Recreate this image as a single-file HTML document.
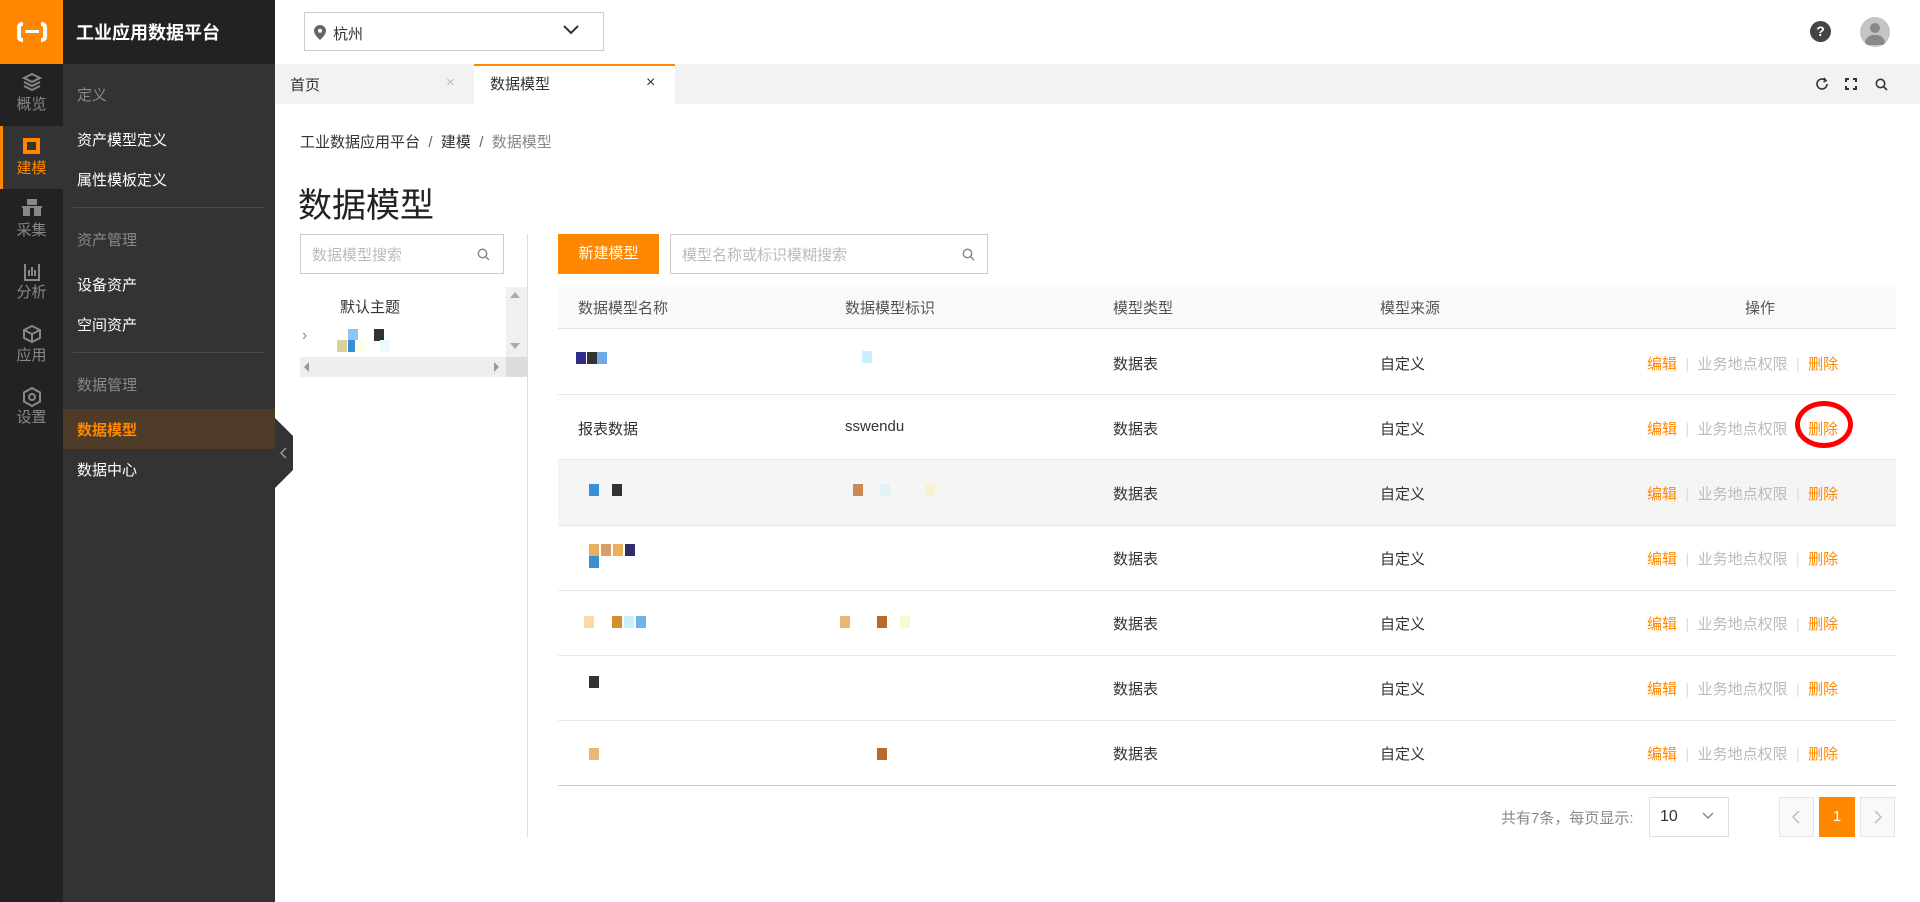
<!DOCTYPE html>
<html><head><meta charset="utf-8"><style>
*{box-sizing:border-box;margin:0;padding:0}
body{width:1920px;height:902px;position:relative;overflow:hidden;background:#fff;font-family:"Liberation Sans","Noto Sans CJK SC",sans-serif;font-size:15px;color:#333}
.a{position:absolute}
.ib{left:0;top:0;width:63px;height:902px;background:#222}
.nav{left:63px;top:0;width:212px;height:902px;background:#333}
.ic{left:0;width:63px;text-align:center;color:#888;font-size:15px}
.nt{left:77px;color:#fff;font-size:15px}
.ng{left:77px;color:#888;font-size:15px}
.td{position:absolute;font-size:15px;color:#333}
.px{position:absolute;width:10px;height:12px}
</style></head><body>
<div class="a ib"></div>
<div class="a nav"></div>
<div class="a" style="left:0;top:0;width:63px;height:64px;background:#ff8800"></div>
<div class="a" style="left:17px;top:22px;width:30px;height:20px;border:4px solid #fff;border-radius:5px"></div>
<div class="a" style="left:23px;top:18px;width:18px;height:28px;background:#ff8800"></div>
<div class="a" style="left:25px;top:30px;width:14px;height:3px;background:#fff"></div>
<div class="a" style="left:63px;top:0;width:212px;height:64px;background:#222"></div>
<div class="a" style="left:76px;top:19px;color:#fff;font-size:18px;font-weight:bold">工业应用数据平台</div>
<!-- icon bar -->
<svg class="a" style="left:22px;top:72px" width="20" height="20" viewBox="0 0 20 20" fill="none" stroke="#888" stroke-width="2"><path d="M10 2L18 6L10 10L2 6Z"/><path d="M2 10L10 14L18 10"/><path d="M2 14L10 18L18 14"/></svg>
<div class="a ic" style="top:93px">概览</div>
<div class="a" style="left:0;top:126px;width:63px;height:63px;background:#333"></div>
<div class="a" style="left:0;top:126px;width:3px;height:63px;background:#ff8800"></div>
<div class="a" style="left:23px;top:138px;width:17px;height:16px;border:2px solid #ff8800;background:#ff8800;padding:2px"><div style="width:9px;height:8px;background:#333;border:1px solid #333"></div></div>
<div class="a ic" style="top:157px;color:#ff8800">建模</div>
<svg class="a" style="left:22px;top:199px" width="20" height="18" viewBox="0 0 20 18" fill="#888"><rect x="5" y="0" width="10" height="6"/><rect x="1" y="8" width="7" height="9"/><rect x="12" y="8" width="7" height="9"/><rect x="0" y="7" width="20" height="2"/></svg>
<div class="a ic" style="top:219px">采集</div>
<svg class="a" style="left:22px;top:262px" width="20" height="20" viewBox="0 0 20 20" fill="none" stroke="#888" stroke-width="2"><path d="M3 2V18H17V2"/><path d="M7 8V14M10 5V14M13 8V14"/></svg>
<div class="a ic" style="top:281px">分析</div>
<svg class="a" style="left:22px;top:324px" width="20" height="20" viewBox="0 0 20 20" fill="none" stroke="#888" stroke-width="2"><path d="M10 2L18 6V14L10 18L2 14V6Z"/><path d="M2 6L10 10L18 6M10 10V18"/></svg>
<div class="a ic" style="top:344px">应用</div>
<svg class="a" style="left:22px;top:387px" width="20" height="20" viewBox="0 0 20 20" fill="none" stroke="#888" stroke-width="2"><path d="M10 1L18 5.5V14.5L10 19L2 14.5V5.5Z"/><circle cx="10" cy="10" r="3"/></svg>
<div class="a ic" style="top:406px">设置</div>
<!-- nav -->
<div class="a ng" style="top:84px">定义</div>
<div class="a nt" style="top:129px">资产模型定义</div>
<div class="a nt" style="top:169px">属性模板定义</div>
<div class="a" style="left:73px;top:207px;width:192px;height:1px;background:#4a4a4a"></div>
<div class="a ng" style="top:229px">资产管理</div>
<div class="a nt" style="top:274px">设备资产</div>
<div class="a nt" style="top:314px">空间资产</div>
<div class="a" style="left:73px;top:352px;width:192px;height:1px;background:#4a4a4a"></div>
<div class="a ng" style="top:374px">数据管理</div>
<div class="a" style="left:63px;top:409px;width:212px;height:40px;background:#4e3c28"></div>
<div class="a nt" style="top:419px;color:#ff8800;font-weight:bold">数据模型</div>
<div class="a nt" style="top:459px">数据中心</div>
<svg class="a" style="left:275px;top:418px" width="20" height="70" viewBox="0 0 20 70"><path d="M0 0L18 18V52L0 70Z" fill="#333"/><path d="M11 30L6 35L11 40" stroke="#999" stroke-width="1.5" fill="none"/></svg>
<!-- header -->
<div class="a" style="left:304px;top:12px;width:300px;height:39px;border:1px solid #ccc"></div>
<svg class="a" style="left:314px;top:25px" width="12" height="15" viewBox="0 0 12 15"><path d="M6 0C2.7 0 0 2.6 0 5.8 0 10 6 15 6 15S12 10 12 5.8C12 2.6 9.3 0 6 0Z" fill="#666"/><circle cx="6" cy="5.8" r="2" fill="#fff"/></svg>
<div class="a" style="left:333px;top:23px;font-size:15px;color:#333">杭州</div>
<svg class="a" style="left:563px;top:25px" width="16" height="10" viewBox="0 0 16 10"><path d="M1 1L8 8L15 1" stroke="#333" stroke-width="2" fill="none"/></svg>
<div class="a" style="left:1810px;top:21px;width:21px;height:21px;border-radius:50%;background:#444;color:#fff;font-weight:bold;font-size:14px;text-align:center;line-height:21px">?</div>
<div class="a" style="left:1860px;top:17px;width:30px;height:30px;border-radius:50%;background:#c4c4c4;overflow:hidden"><div style="position:absolute;left:10px;top:6px;width:10px;height:10px;border-radius:50%;background:#888"></div><div style="position:absolute;left:5px;top:18px;width:20px;height:10px;border-radius:10px 10px 2px 2px;background:#888"></div></div>
<!-- tabs -->
<div class="a" style="left:275px;top:64px;width:1645px;height:40px;background:#f2f2f2"></div>
<div class="a" style="left:290px;top:74px;font-size:15px">首页</div>
<div class="a" style="left:446px;top:74px;color:#bbb;font-size:15px">×</div>
<div class="a" style="left:474px;top:64px;width:201px;height:40px;background:#fff;border-top:2px solid #ff8800"></div>
<div class="a" style="left:490px;top:73px;font-size:15px">数据模型</div>
<div class="a" style="left:646px;top:74px;color:#333;font-size:16px">×</div>
<svg class="a" style="left:1815px;top:77px" width="14" height="14" viewBox="0 0 14 14" fill="none" stroke="#333" stroke-width="1.6"><path d="M12 7A5 5 0 1 1 10 3"/><path d="M9 1L11 3.5L8.5 5"/></svg>
<svg class="a" style="left:1845px;top:78px" width="12" height="12" viewBox="0 0 12 12" fill="none" stroke="#333" stroke-width="2"><path d="M1 4V1H4M8 1H11V4M11 8V11H8M4 11H1V8"/></svg>
<svg class="a" style="left:1875px;top:78px" width="13" height="13" viewBox="0 0 13 13" fill="none" stroke="#333" stroke-width="1.6"><circle cx="5.5" cy="5.5" r="4.2"/><path d="M8.5 8.5L12 12"/></svg>
<!-- content -->
<div class="a" style="left:300px;top:131px;font-size:15px;color:#333">工业数据应用平台 <span style="color:#666">&nbsp;/&nbsp;</span> 建模 <span style="color:#666">&nbsp;/&nbsp;</span> <span style="color:#888">数据模型</span></div>
<div class="a" style="left:298px;top:178px;font-size:34px;color:#222">数据模型</div>
<div class="a" style="left:300px;top:234px;width:204px;height:40px;border:1px solid #ccc"></div>
<div class="a" style="left:312px;top:244px;color:#bbb;font-size:15px">数据模型搜索</div>
<svg class="a" style="left:477px;top:248px" width="13" height="13" viewBox="0 0 13 13" fill="none" stroke="#888" stroke-width="1.5"><circle cx="5.5" cy="5.5" r="4.2"/><path d="M8.5 8.5L12 12"/></svg>
<div class="a" style="left:527px;top:234px;width:1px;height:603px;background:#ddd"></div>
<div class="a" style="left:506px;top:287px;width:21px;height:70px;background:#f0f0f0"></div>
<div class="a" style="left:300px;top:357px;width:227px;height:20px;background:#eee"></div>
<div class="a" style="left:506px;top:357px;width:21px;height:20px;background:#ddd"></div>
<div class="a" style="left:510px;top:292px;border:5px solid transparent;border-bottom:6px solid #aaa;border-top:0"></div>
<div class="a" style="left:510px;top:343px;border:5px solid transparent;border-top:6px solid #aaa;border-bottom:0"></div>
<div class="a" style="left:304px;top:362px;border:5px solid transparent;border-right:5px solid #999;border-left:0"></div>
<div class="a" style="left:494px;top:362px;border:5px solid transparent;border-left:5px solid #999;border-right:0"></div>
<div class="a" style="left:340px;top:296px;font-size:15px">默认主题</div>
<div class="a" style="left:302px;top:327px;color:#888;font-size:16px">›</div>
<div class="px" style="left:348px;top:329px;background:#8cc6f5;height:12px"></div>
<div class="px" style="left:374px;top:329px;background:#333"></div>
<div class="px" style="left:337px;top:340px;background:#d6d49a"></div>
<div class="px" style="left:348px;top:340px;background:#3a8fd4"></div>
<div class="px" style="left:355px;top:340px;background:#fdfde8"></div>
<div class="px" style="left:380px;top:340px;background:#e8fcff"></div>
<div class="a" style="left:558px;top:234px;width:101px;height:40px;background:#ff8800;color:#fff;text-align:center;line-height:40px;font-size:15px">新建模型</div>
<div class="a" style="left:670px;top:234px;width:318px;height:40px;border:1px solid #ccc"></div>
<div class="a" style="left:682px;top:244px;color:#bbb;font-size:15px">模型名称或标识模糊搜索</div>
<svg class="a" style="left:962px;top:248px" width="13" height="13" viewBox="0 0 13 13" fill="none" stroke="#888" stroke-width="1.5"><circle cx="5.5" cy="5.5" r="4.2"/><path d="M8.5 8.5L12 12"/></svg>
<!-- table -->
<div class="a" style="left:558px;top:285px;width:1338px;height:44px;background:#f9f9f9;border-bottom:1px solid #e5e5e5"></div>
<div class="td" style="left:578px;top:297px;color:#555">数据模型名称</div>
<div class="td" style="left:845px;top:297px;color:#555">数据模型标识</div>
<div class="td" style="left:1113px;top:297px;color:#555">模型类型</div>
<div class="td" style="left:1380px;top:297px;color:#555">模型来源</div>
<div class="td" style="left:1745px;top:297px;color:#555">操作</div>
<div class="a" style="left:558px;top:459px;width:1338px;height:66px;background:#f5f5f5"></div>
<div class="a" style="left:558px;top:394px;width:1338px;height:1px;background:#e8e8e8"></div>
<div class="a" style="left:558px;top:459px;width:1338px;height:1px;background:#e8e8e8"></div>
<div class="a" style="left:558px;top:525px;width:1338px;height:1px;background:#e8e8e8"></div>
<div class="a" style="left:558px;top:590px;width:1338px;height:1px;background:#e8e8e8"></div>
<div class="a" style="left:558px;top:655px;width:1338px;height:1px;background:#e8e8e8"></div>
<div class="a" style="left:558px;top:720px;width:1338px;height:1px;background:#e8e8e8"></div>
<div class="a" style="left:558px;top:785px;width:1338px;height:1px;background:#ccc"></div>
<div class="td" style="left:578px;top:418px">报表数据</div>
<div class="td" style="left:845px;top:418px">sswendu</div>
<!-- pixel blobs -->
<div class="px" style="left:576px;top:352px;background:#2f2f88"></div><div class="px" style="left:587px;top:352px;background:#333"></div><div class="px" style="left:597px;top:352px;background:#6fa9e8"></div>
<div class="px" style="left:862px;top:351px;background:#c8f0ff"></div>
<div class="px" style="left:589px;top:484px;background:#3a8fd4"></div><div class="px" style="left:612px;top:484px;background:#333"></div>
<div class="px" style="left:853px;top:484px;background:#c98a55"></div><div class="px" style="left:880px;top:484px;background:#e0f4f7"></div><div class="px" style="left:925px;top:484px;background:#f5f3d3"></div>
<div class="px" style="left:589px;top:544px;background:#e8b05c"></div><div class="px" style="left:601px;top:544px;background:#d8a066"></div><div class="px" style="left:613px;top:544px;background:#e8b05c"></div><div class="px" style="left:625px;top:544px;background:#2f2f6a"></div><div class="px" style="left:589px;top:556px;background:#3a8fd4"></div>
<div class="px" style="left:584px;top:616px;background:#fcd9a5"></div><div class="px" style="left:612px;top:616px;background:#d49030"></div><div class="px" style="left:624px;top:616px;background:#c8f0ff"></div><div class="px" style="left:636px;top:616px;background:#6fb4e8"></div>
<div class="px" style="left:840px;top:616px;background:#e8b878"></div><div class="px" style="left:877px;top:616px;background:#b86a2a"></div><div class="px" style="left:900px;top:616px;background:#fafad2"></div>
<div class="px" style="left:589px;top:676px;background:#333"></div>
<div class="px" style="left:589px;top:748px;background:#e8b878"></div><div class="px" style="left:877px;top:748px;background:#b86a2a"></div>
<!-- rows text -->
<div class="td" style="left:1113px;top:353px">数据表</div><div class="td" style="left:1380px;top:353px">自定义</div>
<div class="td" style="left:1113px;top:418px">数据表</div><div class="td" style="left:1380px;top:418px">自定义</div>
<div class="td" style="left:1113px;top:483px">数据表</div><div class="td" style="left:1380px;top:483px">自定义</div>
<div class="td" style="left:1113px;top:548px">数据表</div><div class="td" style="left:1380px;top:548px">自定义</div>
<div class="td" style="left:1113px;top:613px">数据表</div><div class="td" style="left:1380px;top:613px">自定义</div>
<div class="td" style="left:1113px;top:678px">数据表</div><div class="td" style="left:1380px;top:678px">自定义</div>
<div class="td" style="left:1113px;top:743px">数据表</div><div class="td" style="left:1380px;top:743px">自定义</div>
<div class="td" style="left:1647px;top:353px;color:#ff8800">编辑 <span style="color:#ddd">&nbsp;|&nbsp;</span> <span style="color:#bbb">业务地点权限</span> <span style="color:#ddd">&nbsp;|&nbsp;</span> 删除</div>
<div class="td" style="left:1647px;top:418px;color:#ff8800">编辑 <span style="color:#ddd">&nbsp;|&nbsp;</span> <span style="color:#bbb">业务地点权限</span> <span style="color:#ddd">&nbsp;|&nbsp;</span> 删除</div>
<div class="td" style="left:1647px;top:483px;color:#ff8800">编辑 <span style="color:#ddd">&nbsp;|&nbsp;</span> <span style="color:#bbb">业务地点权限</span> <span style="color:#ddd">&nbsp;|&nbsp;</span> 删除</div>
<div class="td" style="left:1647px;top:548px;color:#ff8800">编辑 <span style="color:#ddd">&nbsp;|&nbsp;</span> <span style="color:#bbb">业务地点权限</span> <span style="color:#ddd">&nbsp;|&nbsp;</span> 删除</div>
<div class="td" style="left:1647px;top:613px;color:#ff8800">编辑 <span style="color:#ddd">&nbsp;|&nbsp;</span> <span style="color:#bbb">业务地点权限</span> <span style="color:#ddd">&nbsp;|&nbsp;</span> 删除</div>
<div class="td" style="left:1647px;top:678px;color:#ff8800">编辑 <span style="color:#ddd">&nbsp;|&nbsp;</span> <span style="color:#bbb">业务地点权限</span> <span style="color:#ddd">&nbsp;|&nbsp;</span> 删除</div>
<div class="td" style="left:1647px;top:743px;color:#ff8800">编辑 <span style="color:#ddd">&nbsp;|&nbsp;</span> <span style="color:#bbb">业务地点权限</span> <span style="color:#ddd">&nbsp;|&nbsp;</span> 删除</div>
<div class="a" style="left:1795px;top:401px;width:58px;height:47px;border:5px solid #f00;border-radius:50%"></div>
<!-- pagination -->
<div class="a" style="left:1501px;top:807px;color:#888;font-size:15px">共有7条，每页显示:</div>
<div class="a" style="left:1649px;top:797px;width:80px;height:40px;border:1px solid #ddd"></div>
<div class="a" style="left:1660px;top:808px;font-size:16px;color:#333">10</div>
<svg class="a" style="left:1702px;top:812px" width="12" height="8" viewBox="0 0 12 8"><path d="M1 1L6 6L11 1" stroke="#888" stroke-width="1.5" fill="none"/></svg>
<div class="a" style="left:1779px;top:797px;width:35px;height:40px;border:1px solid #e5e5e5;background:#f9f9f9"></div>
<svg class="a" style="left:1792px;top:810px" width="8" height="14" viewBox="0 0 8 14"><path d="M7 1L1 7L7 13" stroke="#bbb" stroke-width="1.5" fill="none"/></svg>
<div class="a" style="left:1819px;top:797px;width:36px;height:40px;background:#ff8800;color:#fff;text-align:center;line-height:40px;font-size:15px">1</div>
<div class="a" style="left:1860px;top:797px;width:35px;height:40px;border:1px solid #e5e5e5;background:#f9f9f9"></div>
<svg class="a" style="left:1874px;top:810px" width="8" height="14" viewBox="0 0 8 14"><path d="M1 1L7 7L1 13" stroke="#bbb" stroke-width="1.5" fill="none"/></svg>
</body></html>
